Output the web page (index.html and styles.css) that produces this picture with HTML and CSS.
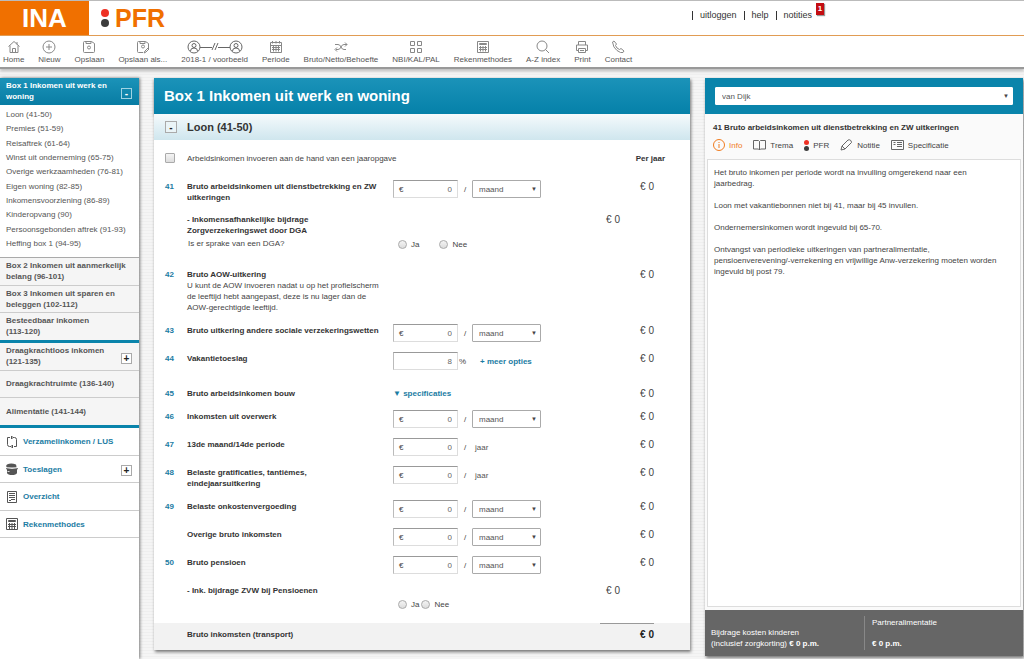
FILE: index.html
```html
<!DOCTYPE html>
<html lang="nl">
<head>
<meta charset="utf-8">
<title>INA PFR</title>
<link rel="stylesheet" href="styles.css">
</head>
<body>
<header class="topbar">
  <div class="logo-ina">INA</div>
  <div class="logo-pfr"><span class="dots"><i></i><i></i></span>PFR</div>
  <nav class="user-links"><a href="#">uitloggen</a><a href="#">help</a><a href="#">notities</a><span class="badge">1</span></nav>
</header>
<nav class="toolbar">
  <a href="#"><svg width="12" height="14" viewBox="0 0 12 14"><path d="M.5 6.500 6 1.500l5.500 5M2 5.500v7h8v-7M4.500 12.500v-4h3v4M9 2v2.500"/></svg>Home</a>
  <a href="#"><svg width="14" height="14" viewBox="0 0 14 14"><circle cx="7" cy="7" r="6"/><path d="M7 4v6M4 7h6"/></svg>Nieuw</a>
  <a href="#"><svg width="12" height="14" viewBox="0 0 12 14"><path d="M.5 2.500q0-1 1-1h7l3 2v8q0 1-1 1h-9q-1 0-1-1zM3 1.500v2h5v-2"/><circle cx="6" cy="7.500" r="1.500"/></svg>Opslaan</a>
  <a href="#"><svg width="12" height="14" viewBox="0 0 12 14"><path d="M6 12.500H1.500q-1 0-1-1v-9q0-1 1-1h7l3 2v5M3 1.500v2h5v-2M7 13l1-2 3-3 1 1-3 3z"/><circle cx="6" cy="6.500" r="1.500"/></svg>Opslaan als...</a>
  <a href="#"><svg class="dark" width="56" height="14" viewBox="0 0 56 14"><circle cx="7" cy="7" r="6"/><circle cx="7" cy="5.500" r="2"/><path d="M3.500 11q0-3 3.500-3t3.500 3M13 7.500h12M31 7.500h12M25 10l3-7M28 10l3-7"/><circle cx="49" cy="7" r="6"/><circle cx="49" cy="5.500" r="2"/><path d="M45.500 11q0-3 3.500-3t3.500 3"/></svg>2018-1 / voorbeeld</a>
  <a href="#"><svg width="14" height="14" viewBox="0 0 14 14"><path d="M1.500 2.500h11v10h-11zM1.500 5.500h11M3.500 1v2.500M7 1v2.500M10.500 1v2.500M4.500 6v5.500M7 6v5.500M9.500 6v5.500M3 7.500h8M3 9.500h8"/></svg>Periode</a>
  <a href="#"><svg width="14" height="14" viewBox="0 0 14 14"><path d="M1 4.500h3q2 0 3 2.500t3 2.500h2M2 9.500h2q2 0 3-2.500t3-2.500h3M11 2.500l2 2-2 2M3 7.500l-2 2 2 2"/></svg>Bruto/Netto/Behoefte</a>
  <a href="#"><svg width="12" height="14" viewBox="0 0 12 14"><path d="M.5 1.500h4v4h-4zM7.500 1.500h4v4h-4zM.5 8.500h4v4h-4zM7.500 8.500h4v4h-4z"/></svg>NBI/KAL/PAL</a>
  <a href="#"><svg width="12" height="14" viewBox="0 0 12 14"><path d="M.5 1.500h11v11H.5zM2.500 3.500h7v1h-7zM3.500 6v5.500M6 6v5.500M8.500 6v5.500M2 7.500h8M2 9.500h8"/></svg>Rekenmethodes</a>
  <a href="#"><svg width="14" height="14" viewBox="0 0 14 14"><circle cx="6" cy="6" r="5"/><path d="M9.500 9.500l3.500 3.500"/></svg>A-Z index</a>
  <a href="#"><svg width="14" height="14" viewBox="0 0 14 14"><path d="M3.500 5V1.500h7V5M3 10.500H1.500V5h11v5.500H11M3.500 8.500h7v4h-7zM5 10.500h4"/></svg>Print</a>
  <a href="#"><svg width="14" height="14" viewBox="0 0 14 14"><path d="M1.500 2 3 1l2.500 3L4.500 5.500q1 3 4 4L10 8.500l3 2.500-1 1.500q-2 1-6-2T1.500 2z"/></svg>Contact</a>
</nav>

<main class="page">
  <aside class="sidebar">
    <div class="side-head"><a href="#">Box 1 Inkomen uit werk en woning</a><button class="toggle toggle-light" aria-label="Inklappen">-</button></div>
    <ul class="side-sub">
      <li><a href="#">Loon (41-50)</a></li>
      <li><a href="#">Premies (51-59)</a></li>
      <li><a href="#">Reisaftrek (61-64)</a></li>
      <li><a href="#">Winst uit onderneming (65-75)</a></li>
      <li><a href="#">Overige werkzaamheden (76-81)</a></li>
      <li><a href="#">Eigen woning (82-85)</a></li>
      <li><a href="#">Inkomensvoorziening (86-89)</a></li>
      <li><a href="#">Kinderopvang (90)</a></li>
      <li><a href="#">Persoonsgebonden aftrek (91-93)</a></li>
      <li><a href="#">Heffing box 1 (94-95)</a></li>
    </ul>
    <div class="side-group">
      <div class="side-item"><a href="#">Box 2 Inkomen uit aanmerkelijk belang (96-101)</a></div>
      <div class="side-item"><a href="#">Box 3 Inkomen uit sparen en beleggen (102-112)</a></div>
      <div class="side-item"><a href="#">Besteedbaar inkomen<br>(113-120)</a></div>
    </div>
    <div class="side-group">
      <div class="side-item"><a href="#">Draagkrachtloos inkomen (121-135)</a><button class="toggle" aria-label="Uitklappen">+</button></div>
      <div class="side-item"><a href="#">Draagkrachtruimte (136-140)</a></div>
      <div class="side-item"><a href="#">Alimentatie (141-144)</a></div>
    </div>
    <div class="side-tools">
      <div class="side-tool"><svg width="12" height="12" viewBox="0 0 12 12"><path d="M4 1.500H1.500v7q0 2 2 2H5M8 10.500h2.500v-7q0-2-2-2H7M5.500 0v3L7 1.500zM6.500 9v3L5 10.500z"/></svg><a href="#">Verzamelinkomen / LUS</a></div>
      <div class="side-tool"><svg class="solid" width="12" height="12" viewBox="0 0 12 12"><path d="M1 1.500q4-2 9 0l.5 2-.5 1H1L0 3zM0 5h12l-1 2v3q-1 2-5 2t-5-2V7z"/><path class="cut" d="M1 4.800q5 1.500 10 0M1.500 8.500h2"/></svg><a href="#">Toeslagen</a><button class="toggle" aria-label="Uitklappen">+</button></div>
      <div class="side-tool"><svg width="12" height="12" viewBox="0 0 12 12"><path d="M1.500.5h9v11h-9zM3 2.500h6M3 4.500h6M3 6.500h6M5 8.500h4M3 9.500h2"/></svg><a href="#">Overzicht</a></div>
      <div class="side-tool"><svg width="12" height="12" viewBox="0 0 12 12"><path d="M.5.5h11v11H.5zM2.500 2.500h7v1h-7zM3.500 5v6M6 5v6M8.500 5v6M2 6.500h8M2 8.500h8"/></svg><a href="#">Rekenmethodes</a></div>
    </div>
  </aside>

  <section class="panel">
    <h1 class="panel-title">Box 1 Inkomen uit werk en woning</h1>
    <div class="panel-sub"><button class="toggle" aria-label="Inklappen">-</button><h2>Loon (41-50)</h2></div>
    <form class="rows">
      <div class="row row-head"><input type="checkbox" id="jaaropgave"><label class="wide" for="jaaropgave">Arbeidsinkomen invoeren aan de hand van een jaaropgave</label><b class="amount-head">Per jaar</b></div>

      <div class="row r33"><span class="num">41</span><label class="name" for="f41">Bruto arbeidsinkomen uit dienstbetrekking en ZW uitkeringen</label>
        <div class="ctl"><span class="field"><span>€</span><input id="f41" type="text" value="0"></span><span class="slash">/</span><span class="pick"><select aria-label="Periode 41"><option>maand</option></select></span></div><span class="amount">€ 0</span></div>

      <div class="row r55"><div class="name"><div class="short">- Inkomensafhankelijke bijdrage Zorgverzekeringswet door DGA</div><div class="question">Is er sprake van een DGA?</div></div>
        <div class="ctl radios spaced"><label><input type="radio" name="dga">Ja</label><label><input type="radio" name="dga">Nee</label></div><span class="subamount">€ 0</span></div>

      <div class="row r56"><span class="num">42</span><div class="name">Bruto AOW-uitkering<p>U kunt de AOW invoeren nadat u op het profielscherm de leeftijd hebt aangepast, deze is nu lager dan de AOW-gerechtigde leeftijd.</p></div><span class="amount">€ 0</span></div>

      <div class="row r28"><span class="num">43</span><label class="name" for="f43">Bruto uitkering andere sociale verzekeringswetten</label>
        <div class="ctl"><span class="field"><span>€</span><input id="f43" type="text" value="0"></span><span class="slash">/</span><span class="pick"><select aria-label="Periode 43"><option>maand</option></select></span></div><span class="amount">€ 0</span></div>

      <div class="row r35"><span class="num">44</span><label class="name" for="f44">Vakantietoeslag</label>
        <div class="ctl"><span class="field"><input id="f44" type="text" value="8"></span><span class="percent">%</span><a class="more" href="#">+ meer opties</a></div><span class="amount">€ 0</span></div>

      <div class="row r23"><span class="num">45</span><span class="name">Bruto arbeidsinkomen bouw</span>
        <div class="ctl"><a class="more specs" href="#">▼ specificaties</a></div><span class="amount">€ 0</span></div>

      <div class="row r28"><span class="num">46</span><label class="name" for="f46">Inkomsten uit overwerk</label>
        <div class="ctl"><span class="field"><span>€</span><input id="f46" type="text" value="0"></span><span class="slash">/</span><span class="pick"><select aria-label="Periode 46"><option>maand</option></select></span></div><span class="amount">€ 0</span></div>

      <div class="row r28"><span class="num">47</span><label class="name" for="f47">13de maand/14de periode</label>
        <div class="ctl"><span class="field"><span>€</span><input id="f47" type="text" value="0"></span><span class="slash">/</span><span class="year">jaar</span></div><span class="amount">€ 0</span></div>

      <div class="row r34"><span class="num">48</span><label class="name" for="f48">Belaste gratificaties, tantièmes,<br>eindejaarsuitkering</label>
        <div class="ctl"><span class="field"><span>€</span><input id="f48" type="text" value="0"></span><span class="slash">/</span><span class="year">jaar</span></div><span class="amount">€ 0</span></div>

      <div class="row r28"><span class="num">49</span><label class="name" for="f49">Belaste onkostenvergoeding</label>
        <div class="ctl"><span class="field"><span>€</span><input id="f49" type="text" value="0"></span><span class="slash">/</span><span class="pick"><select aria-label="Periode 49"><option>maand</option></select></span></div><span class="amount">€ 0</span></div>

      <div class="row r28"><label class="name" for="f49b">Overige bruto inkomsten</label>
        <div class="ctl"><span class="field"><span>€</span><input id="f49b" type="text" value="0"></span><span class="slash">/</span><span class="pick"><select aria-label="Periode overige"><option>maand</option></select></span></div><span class="amount">€ 0</span></div>

      <div class="row r28"><span class="num">50</span><label class="name" for="f50">Bruto pensioen</label>
        <div class="ctl"><span class="field"><span>€</span><input id="f50" type="text" value="0"></span><span class="slash">/</span><span class="pick"><select aria-label="Periode 50"><option>maand</option></select></span></div><span class="amount">€ 0</span></div>

      <div class="row r39"><span class="name">- Ink. bijdrage ZVW bij Pensioenen</span>
        <div class="ctl radios low"><label><input type="radio" name="zvw">Ja</label><label><input type="radio" name="zvw">Nee</label></div><span class="subamount">€ 0</span></div>

      <div class="row total"><span class="name">Bruto inkomsten (transport)</span><span class="sumline"></span><b class="amount">€ 0</b></div>
    </form>
  </section>

  <aside class="info">
    <div class="info-head"><span class="pick"><select aria-label="Dossier"><option>van Dijk</option></select></span></div>
    <h3>41 Bruto arbeidsinkomen uit dienstbetrekking en ZW uitkeringen</h3>
    <nav class="tabs">
      <a class="active" href="#"><svg width="12" height="12" viewBox="0 0 12 12"><circle cx="6" cy="6" r="5.500"/><path d="M6 5v4M6 3v1"/></svg>Info</a>
      <a href="#"><svg width="13" height="12" viewBox="0 0 13 12"><path d="M.5 1.500h5l1 1 1-1h5v8.500h-5l-1 1-1-1h-5zM6.500 2.500V11"/></svg>Trema</a>
      <a href="#"><span class="dots small"><i></i><i></i></span>PFR</a>
      <a href="#"><svg width="13" height="12" viewBox="0 0 13 12"><path d="M1 11l1-4 6-6q3-1 3.500 2.500L5 10zM2 7l3 3"/></svg>Notitie</a>
      <a href="#"><svg width="13" height="12" viewBox="0 0 13 12"><path d="M.5 1.500h12v9H.5zM2.500 3.500h2M2.500 5.500h2M6 3.500h5M6 5.500h5M6 7.500h5"/></svg>Specificatie</a>
    </nav>
    <article class="info-text">
      <p>Het bruto inkomen per periode wordt na invulling omgerekend naar een jaarbedrag.</p>
      <p>Loon met vakantiebonnen niet bij 41, maar bij 45 invullen.</p>
      <p>Ondernemersinkomen wordt ingevuld bij 65-70.</p>
      <p>Ontvangst van periodieke uitkeringen van partneralimentatie, pensioenverevening/-verrekening en vrijwillige Anw-verzekering moeten worden ingevuld bij post 79.</p>
    </article>
    <footer class="result">
      <div class="result-a">Bijdrage kosten kinderen<br>(inclusief zorgkorting) <b>€ 0 p.m.</b></div>
      <div class="result-b"><span>Partneralimentatie</span><b>€ 0 p.m.</b></div>
    </footer>
  </aside>
</main>
</body>
</html>
```
FILE: styles.css
```css
* { box-sizing: border-box; }
body {
  margin: 0;
  min-height: 100vh;
  display: flex;
  flex-direction: column;
  background: repeating-linear-gradient(#f5f5f5 0 2px, #efefef 2px 3px);
  font: 8px/11px "Liberation Sans", Arial, sans-serif;
  color: #444;
}
a { color: inherit; text-decoration: none; }
h1, h2, h3, p, ul { margin: 0; padding: 0; }
button, input, select { font: inherit; color: inherit; }
svg { fill: none; stroke: #888; stroke-width: 1; flex: none; }
svg.dark { stroke: #666; }

/* header */
.topbar {
  display: flex;
  height: 36px;
  background: #fff;
  border-top: 1px solid #bbb;
  border-bottom: 1px solid #e39a4e;
}
.logo-ina {
  width: 89px;
  background: #f07000;
  color: #fff;
  font-weight: bold;
  font-size: 26px;
  line-height: 34px;
  text-align: center;
}
.logo-pfr {
  flex: 1;
  display: flex;
  align-items: center;
  gap: 6px;
  padding-left: 12px;
  color: #f07000;
  font-weight: bold;
  font-size: 25px;
  line-height: 34px;
}
.dots { display: grid; gap: 2px; }
.dots i { width: 8px; height: 8px; border-radius: 50%; background: #ee3124; }
.dots i + i { background: #3c3c3c; }
.dots.small { gap: 1px; }
.dots.small i { width: 5px; height: 5px; }
.user-links {
  display: flex;
  align-items: flex-start;
  width: 332px;
  padding-top: 9px;
  font-size: 9px;
  color: #333;
}
.user-links a { display: flex; padding-right: 7px; }
.user-links a::before { content: ""; width: 1px; height: 9px; margin: 1px 7px 0 0; background: #333; }
.badge {
  width: 8px;
  height: 12px;
  margin-top: -7px;
  margin-left: -3px;
  background: #c40d12;
  color: #fff;
  font-weight: bold;
  font-size: 8px;
  text-align: center;
  box-shadow: 1px 1px 1px #999;
}
.toolbar {
  display: flex;
  gap: 14px;
  height: 33px;
  padding: 4px 3px 0;
  background: #fff;
  border-bottom: 2px solid #999;
  box-shadow: 0 2px 3px #bbb;
  color: #555;
  white-space: nowrap;
}
.toolbar a { display: flex; flex-direction: column; align-items: center; }

/* page columns */
.page {
  flex: 1;
  display: grid;
  grid-template-columns: 139px 1fr 318px;
  gap: 15px;
  padding: 9px 1px 0 0;
}

/* sidebar */
.sidebar { background: #fff; box-shadow: 1px 0 3px #777; }
.side-head, .side-item, .side-tool {
  display: flex;
  align-items: center;
  justify-content: space-between;
  height: 27px;
  padding: 0 7px 0 6px;
  font-weight: bold;
}
.side-head { color: #fff; background: linear-gradient(#1b93b9, #087ca3); }
.side-head a, .side-item a { max-width: 125px; padding-bottom: 1px; }
.side-head a { width: 106px; padding-bottom: 2px; }
.toggle {
  width: 11px;
  height: 11px;
  padding: 0;
  flex: none;
  border: 1px solid #aaa;
  background: #fff;
  color: #222;
  font-weight: bold;
  font-size: 10px;
  line-height: 9px;
  margin-top: 3px;
}
.toggle-light { background: none; border-color: #9fd3e3; color: #fff; }
.side-sub {
  display: grid;
  align-content: space-between;
  min-height: 152px;
  padding: 4px 6px 8px;
  list-style: none;
  line-height: 11px;
  color: #555;
}
.side-group {
  border-top: 1px solid #aaa;
  border-bottom: 3px solid #0a84ab;
  background: #f5f5f5;
  color: #555;
}
.side-group + .side-group { border-top: 0; }
.side-item { height: 28px; border-bottom: 1px solid #ccc; }
.side-item:nth-child(2) { height: 27px; }
.side-item:last-child { height: 27px; border-bottom: 0; }
.side-tool {
  justify-content: flex-start;
  gap: 5px;
  height: 28px;
  border-bottom: 1px solid #ccc;
  color: #1b7ca3;
}
.side-tool:nth-child(even) { height: 27px; }
.side-tool .toggle { margin-left: auto; }
.side-tool svg { stroke: #555; }
.side-tool .solid { fill: #555; stroke: none; }
.side-tool .cut { fill: none; stroke: #ddd; }

/* main panel */
.panel {
  align-self: start;
  background: #fff;
  box-shadow: 1px 2px 3px #777;
}
.panel-title {
  padding: 0 10px;
  background: linear-gradient(#1b93b9, #0581a9);
  color: #fff;
  font-size: 15px;
  line-height: 36px;
  box-shadow: 0 2px 3px #999;
}
.panel-sub {
  display: flex;
  align-items: center;
  gap: 10px;
  height: 26px;
  padding-left: 11px;
  background: linear-gradient(#f5fafc, #cfe6ee);
}
.panel-sub .toggle { width: 12px; height: 12px; margin: 0; background: #eaf4f7; }
.panel-sub h2 { font-size: 11px; color: #333; }
.rows { padding-top: 11px; }
.row {
  display: grid;
  grid-template-columns: 22px 206px 1fr 34px;
  align-items: start;
  padding: 0 36px 0 11px;
}
.row-head { min-height: 29px; padding: 2px 25px 0 11px; }
.wide { grid-column: 2 / 4; }
.amount-head { grid-column: 4; justify-self: end; white-space: nowrap; color: #333; }
.r23 { min-height: 23px; }
.r28 { min-height: 28px; }
.r33 { min-height: 33px; }
.r34 { min-height: 34px; }
.r35 { min-height: 35px; }
.r39 { min-height: 39px; }
.r55 { min-height: 55px; }
.r56 { min-height: 56px; }
.num { grid-column: 1; padding-top: 1px; font-weight: bold; color: #1b7ca3; }
.name { grid-column: 2; grid-row: 1; padding: 1px 6px 0 0; font-weight: bold; color: #333; }
.name p, .question { font-weight: normal; color: #444; }
.short { width: 140px; }
.question { padding: 2px 0 0 1px; }
.ctl { grid-column: 3; grid-row: 1; display: flex; align-items: center; }
.amount { grid-column: 4; grid-row: 1; justify-self: end; font-size: 10px; line-height: 13px; }
.subamount { grid-column: 3; grid-row: 1; justify-self: end; font-size: 10px; line-height: 13px; }
.field {
  display: flex;
  align-items: center;
  width: 65px;
  height: 18px;
  padding: 0 5px;
  border: 1px solid #ddd;
  border-top: 1px solid #999;
  border-left-color: #bbb;
  background: #fff;
}
.field input {
  flex: 1;
  min-width: 0;
  padding: 0;
  border: 0;
  background: none;
  text-align: right;
  color: #666;
}
.slash { width: 14px; text-align: center; }
.pick { position: relative; display: block; }
.pick select {
  display: block;
  width: 69px;
  height: 18px;
  padding: 0 6px;
  appearance: none;
  border: 1px solid #aaa;
  border-radius: 1px;
  background: #fff;
  color: #555;
}
.pick::after {
  content: "▼";
  position: absolute;
  right: 4px;
  top: 4px;
  font-size: 6px;
  pointer-events: none;
}
.year { padding-left: 3px; color: #555; }
.percent { width: 22px; padding-left: 1px; }
.more { font-weight: bold; color: #1b7ca3; }
.specs { padding-top: 1px; }
.radios { gap: 2px; padding: 26px 0 0 5px; }
.radios.spaced { gap: 20px; }
.radios.low { padding-top: 15px; }
.radios label { display: flex; align-items: center; gap: 4px; }
input[type="radio"], input[type="checkbox"] {
  appearance: none;
  width: 9px;
  height: 9px;
  margin: 0;
  border: 1px solid #aaa;
  border-radius: 50%;
  background: linear-gradient(#f4f4f4, #ddd);
}
input[type="checkbox"] { width: 10px; height: 10px; border-radius: 1px; }
.total { height: 27px; background: #f2f2f2; }
.total .name { padding-top: 6px; }
.total .amount { padding-top: 5px; color: #222; }
.sumline { grid-column: 3 / 5; grid-row: 1; justify-self: end; width: 54px; height: 1px; background: #999; }

/* info panel */
.info {
  display: flex;
  flex-direction: column;
  margin-bottom: 3px;
  background: #fafafa;
  box-shadow: 1px 2px 3px #777;
}
.info-head { padding: 9px 10px; background: #0a84ab; }
.info-head .pick select { width: 100%; height: 18px; border-color: #fff; }
.info h3 { padding: 8px 8px 0; font-size: 8px; color: #333; }
.tabs { display: flex; align-items: center; gap: 11px; padding: 6px 8px 8px; }
.tabs a { display: flex; align-items: center; gap: 4px; }
.tabs svg { stroke: #666; }
.tabs .active { color: #f07c1f; }
.tabs .active svg { stroke: #f07c1f; }
.info-text {
  flex: 1;
  display: flex;
  flex-direction: column;
  gap: 11px;
  margin: 0 2px 3px;
  padding: 7px 14px 7px 6px;
  border: 1px solid #ddd;
  background: #fff;
}
.info-text p:last-child { overflow-wrap: normal; padding-right: 6px; }
.result {
  display: grid;
  grid-template-columns: 1fr 1fr;
  padding: 6px;
  background: #666;
  color: #fff;
}
.result-a { align-self: end; padding-bottom: 1px; }
.result-b {
  display: flex;
  flex-direction: column;
  justify-content: space-between;
  min-height: 34px;
  padding: 1px 0 1px 7px;
  border-left: 1px solid #888;
}
```
